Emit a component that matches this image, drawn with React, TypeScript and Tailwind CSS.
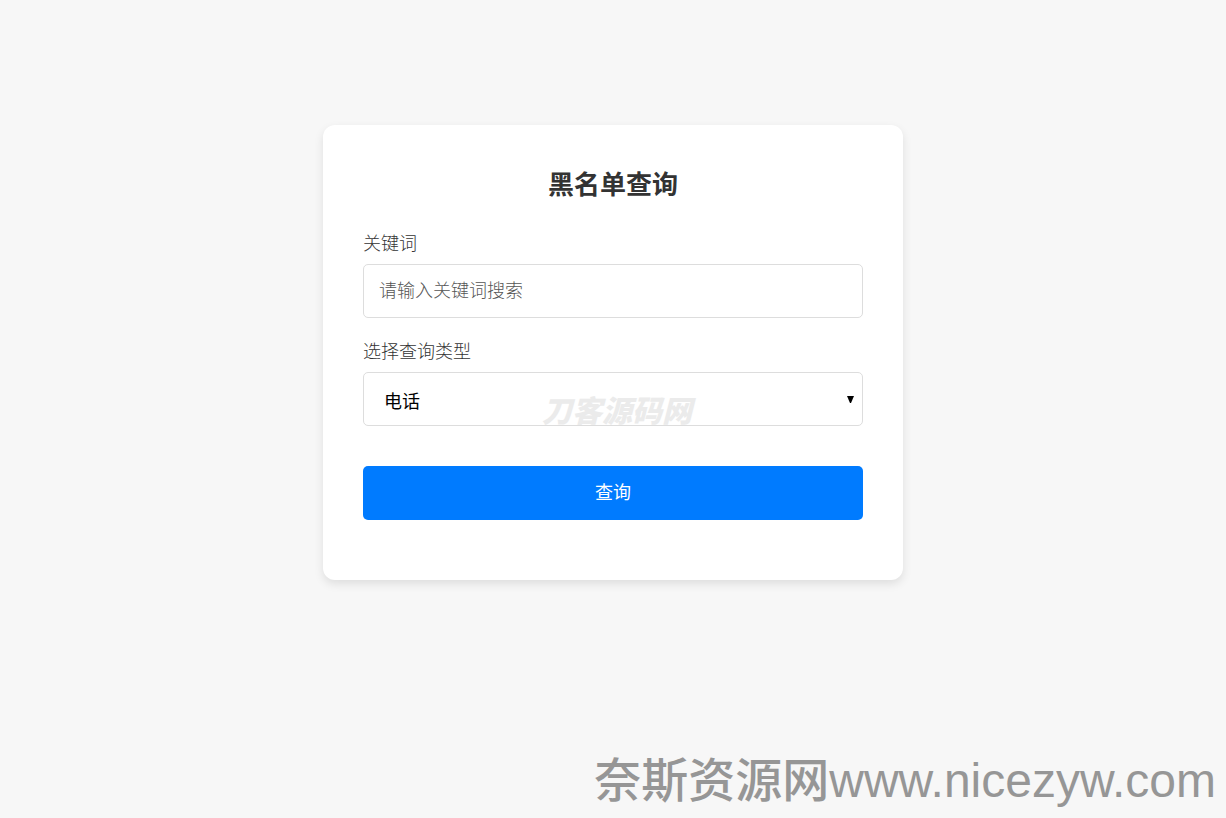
export default function App() {
  return (
    <div className="flex min-h-screen flex-col bg-[#f7f7f7] font-['Liberation_Sans','Noto_Sans_CJK_SC',sans-serif]">
      <main className="flex flex-1 justify-center pt-[125px]">
        <form
          className="flex w-full max-w-[580px] flex-col self-start rounded-xl bg-white px-10 pt-10 pb-[60px] shadow-[0_4px_10px_rgba(0,0,0,0.1)]"
          onSubmit={(event) => event.preventDefault()}
        >
          <h1 className="mb-[27px] text-center text-[26px] leading-10 font-bold text-[#333]">黑名单查询</h1>
          <label htmlFor="keyword" className="mb-2 text-lg leading-6 font-light text-[#333]">
            关键词
          </label>
          <input
            id="keyword"
            type="text"
            placeholder="请输入关键词搜索"
            className="mb-[22px] h-[54px] rounded-[5px] border border-[#ddd] px-[15px] text-lg font-light placeholder:text-[#555]"
          />
          <label htmlFor="type" className="mb-2 text-lg leading-6 font-light text-[#333]">
            选择查询类型
          </label>
          <div className="relative mb-10 flex">
            <select
              id="type"
              className="h-[54px] w-full appearance-none rounded-[5px] border border-[#ddd] bg-white px-5 pt-1.5 text-lg text-black"
            >
              <option>电话</option>
              <option>姓名</option>
            </select>
            <svg className="pointer-events-none absolute top-6 right-2 h-[7px] w-2" viewBox="0 0 8 7">
              <path d="M0 0H7L4 7H3Z" fill="#000" />
            </svg>
            <span className="pointer-events-none absolute inset-x-0 top-6 pl-2 text-center text-[30px] leading-8 font-black text-[#ebebeb] italic">
              刀客源码网
            </span>
          </div>
          <button type="submit" className="h-[54px] rounded-[5px] bg-[#007bff] text-lg text-white">
            查询
          </button>
        </form>
      </main>
      <footer className="flex items-baseline justify-end pr-2.5 leading-[74px] font-medium whitespace-nowrap text-[#969696]">
        <span className="text-[47px]">奈斯资源网</span>
        <span className="text-[48px]">www.nicezyw.com</span>
      </footer>
    </div>
  );
}
